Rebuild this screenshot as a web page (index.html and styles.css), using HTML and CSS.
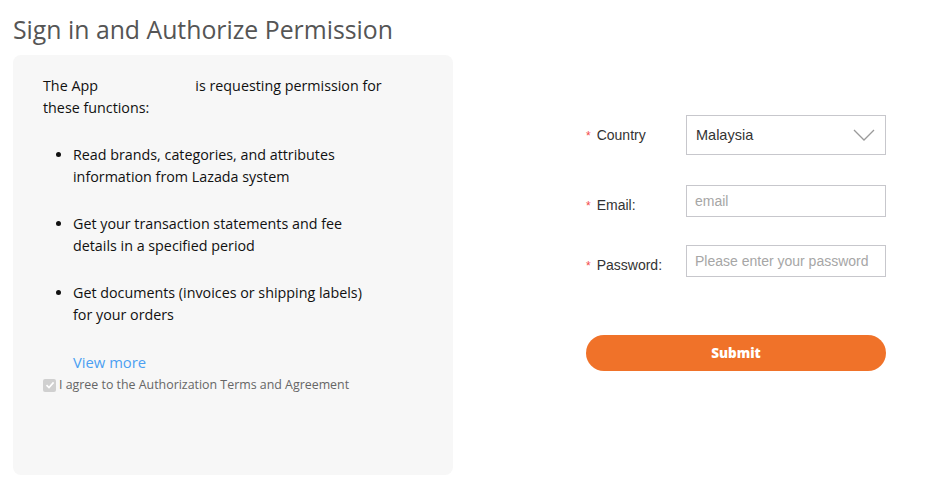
FILE: index.html
```html
<!DOCTYPE html>
<html>
<head>
<meta charset="utf-8">
<link rel="stylesheet" href="styles.css">
</head>
<body>
<div class="page">
  <div class="left">
    <h1 class="title">Sign in and Authorize Permission</h1>
    <div class="card">
      <p class="intro">The App <span class="appname"></span> is requesting permission for these functions:</p>
      <ul class="perms">
        <li>Read brands, categories, and attributes information from Lazada system</li>
        <li>Get your transaction statements and fee details in a specified period</li>
        <li>Get documents (invoices or shipping labels) for your orders</li>
      </ul>
      <a class="more">View more</a>
      <label class="agree"><span class="check"><svg width="10" height="10" viewBox="0 0 10 10"><path d="M1.5 5.2 L4 7.6 L8.6 2.4" fill="none" stroke="#fff" stroke-width="1.6"/></svg></span>I agree to the Authorization Terms and Agreement</label>
    </div>
  </div>
  <div class="right">
    <div class="row row-country">
      <div class="label"><span class="req">*</span>Country</div>
      <div class="select">
        <span>Malaysia</span>
        <svg class="chev" width="22" height="12" viewBox="0 0 22 12"><path d="M1 1 L11 11 L21 1" fill="none" stroke="#9a9a9a" stroke-width="1.3"/></svg>
      </div>
    </div>
    <div class="row row-email">
      <div class="label"><span class="req">*</span>Email:</div>
      <div class="input placeholder">email</div>
    </div>
    <div class="row row-pass">
      <div class="label"><span class="req">*</span>Password:</div>
      <div class="input placeholder">Please enter your password</div>
    </div>
    <button class="submit">Submit</button>
  </div>
</div>
</body>
</html>
```
FILE: styles.css
```css
html, body {
  margin: 0;
  padding: 0;
  background: #fff;
}
.page {
  display: flex;
  align-items: flex-start;
}
.left {
  margin-left: 13px;
  width: 440px;
}
.title {
  margin: 0;
  padding-top: 11px;
  height: 55px;
  box-sizing: border-box;
  font-family: "Open Sans", "Noto Sans", sans-serif;
  font-weight: 400;
  font-size: 24.8px;
  line-height: 36px;
  color: #555;
}
.card {
  background: #f7f7f7;
  border-radius: 8px;
  height: 420px;
  box-sizing: border-box;
  padding: 20px 30px 0 30px;
  font-family: "Open Sans", "Noto Sans", sans-serif;
  font-size: 14.3px;
  line-height: 22px;
  color: #111;
}
.intro {
  margin: 0;
  width: 345px;
}
.appname {
  display: inline-block;
  width: 90px;
}
.perms {
  margin: 25px 0 0 0;
  padding-left: 30px;
}
.perms li {
  margin-bottom: 25px;
  width: 300px;
}
.more {
  display: block;
  margin-left: 30px;
  margin-top: 0;
  color: #4ba0f2;
  font-size: 14.8px;
  line-height: 22px;
}
.agree {
  display: flex;
  align-items: center;
  margin-top: 2px;
  font-size: 12.4px;
  line-height: 20px;
  color: #666;
}
.check {
  display: inline-flex;
  align-items: center;
  justify-content: center;
  width: 13px;
  height: 13px;
  background: #d0d0d0;
  border-radius: 2px;
  margin-right: 3px;
}
.right {
  margin-left: 133px;
  width: 300px;
  padding-top: 115px;
  font-family: "Liberation Sans", Arial, sans-serif;
  font-size: 14px;
}
.row {
  display: flex;
  align-items: center;
}
.label {
  width: 100px;
  color: #333;
}
.req {
  color: #f34a4a;
  font-size: 12px;
  margin-right: 6px;
}
.row-email .label, .row-pass .label {
  padding-top: 8px;
}
.select {
  width: 200px;
  height: 40px;
  box-sizing: border-box;
  border: 1px solid #c7c7cc;
  display: flex;
  align-items: center;
  justify-content: space-between;
  padding: 0 10px 0 9px;
  font-size: 14.5px;
  color: #333;
  background: #fff;
}
.chev {
  display: block;
}
.row-email {
  margin-top: 30px;
}
.row-pass {
  margin-top: 28px;
}
.input {
  width: 200px;
  height: 32px;
  box-sizing: border-box;
  border: 1px solid #c7c7cc;
  padding: 0 8px;
  line-height: 30px;
  font-size: 14px;
  background: #fff;
}
.placeholder {
  color: #a6a6a6;
}
.submit {
  display: block;
  margin-top: 58px;
  width: 300px;
  height: 36px;
  border: none;
  border-radius: 18px;
  background: #f07229;
  color: #fff;
  font-family: "Open Sans", sans-serif;
  font-weight: 800;
  font-size: 13.5px;
  padding: 0;
}
```
